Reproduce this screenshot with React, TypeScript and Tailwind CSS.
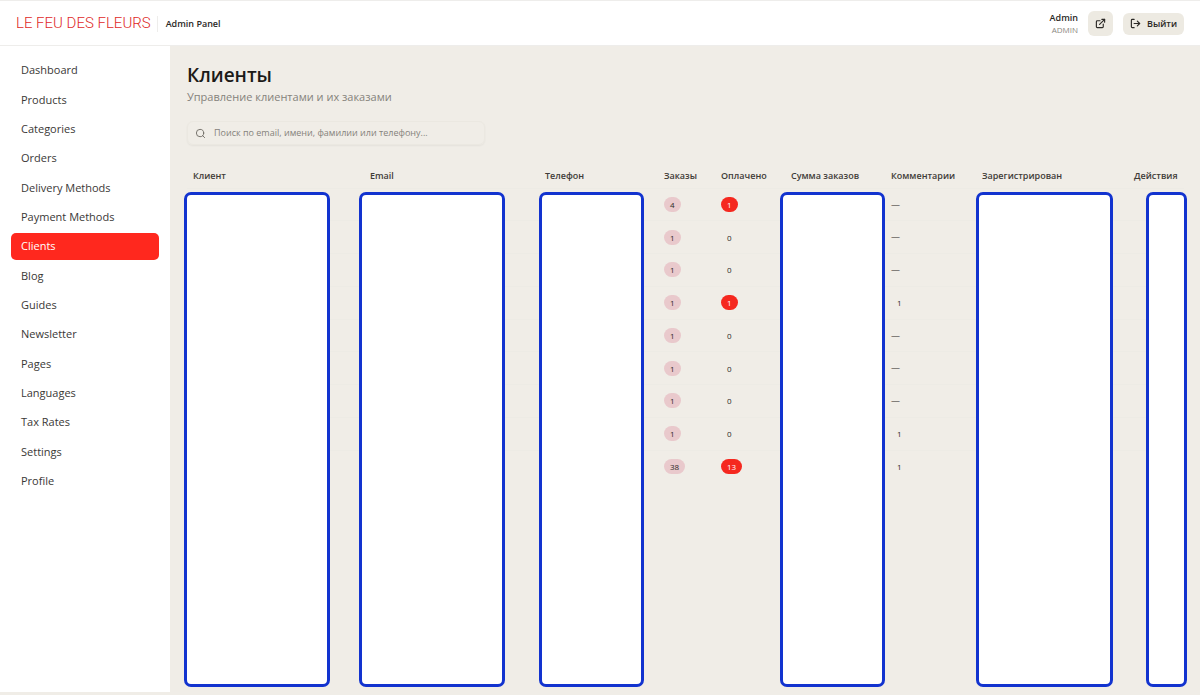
import React from 'react';
import { ExternalLink, LogOut, Search } from 'lucide-react';

const NAV_ITEMS = [
  'Dashboard',
  'Products',
  'Categories',
  'Orders',
  'Delivery Methods',
  'Payment Methods',
  'Clients',
  'Blog',
  'Guides',
  'Newsletter',
  'Pages',
  'Languages',
  'Tax Rates',
  'Settings',
  'Profile',
];

// cover: horizontal extent of the panel that hides the column's private data
const COLUMNS = [
  { title: 'Клиент', width: 'w-[177px]', cover: '-left-[3px] right-[34px]' },
  { title: 'Email', width: 'w-[175px]', cover: '-left-[5px] right-[34px]' },
  { title: 'Телефон', width: 'w-[119px]', cover: 'left-0 right-[14px]' },
  { title: 'Заказы', width: 'w-[57px]' },
  { title: 'Оплачено', width: 'w-[70px]' },
  { title: 'Сумма заказов', width: 'w-[100px]', cover: '-left-[5px] right-0' },
  { title: 'Комментарии', width: 'w-[91px]' },
  { title: 'Зарегистрирован', width: 'w-[152px]', cover: 'left-0 right-[15px]' },
  { title: 'Действия', width: 'w-[56px]', cover: 'left-[18px] -right-[3px]' },
];

const CLIENTS = [
  { orders: 4, paid: 1, comments: 0 },
  { orders: 1, paid: 0, comments: 0 },
  { orders: 1, paid: 0, comments: 0 },
  { orders: 1, paid: 1, comments: 1 },
  { orders: 1, paid: 0, comments: 0 },
  { orders: 1, paid: 0, comments: 0 },
  { orders: 1, paid: 0, comments: 0 },
  { orders: 1, paid: 0, comments: 1 },
  { orders: 38, paid: 13, comments: 1 },
];

const BADGE = 'inline-block rounded-full px-1.5 text-[8px] leading-[15px] font-medium';

const Header: React.FC = () => (
  <header className="flex h-[46px] items-center justify-between border-y border-[#eeedeb] bg-white px-4 pt-px">
    <div className="flex items-center">
      <a href="#" className="font-[Roboto,sans-serif] text-[15px] font-light text-[#e0291f]">
        LE FEU DES FLEURS
      </a>
      <span className="ml-1.5 h-4 w-px bg-[#eeedeb]" />
      <span className="ml-2 text-[9px] font-semibold">Admin Panel</span>
    </div>

    <div className="flex items-center gap-2.5">
      <div className="text-right leading-3">
        <p className="text-[9px] font-semibold">Admin</p>
        <p className="text-[8px] text-[#8b8882]">ADMIN</p>
      </div>
      <button
        type="button"
        aria-label="Open site"
        className="flex size-[25px] items-center justify-center rounded-md bg-[#edeae2]"
      >
        <ExternalLink size={11} strokeWidth={2.5} />
      </button>
      <button
        type="button"
        className="flex h-[22px] items-center gap-1.5 rounded-md bg-[#edeae2] px-[7px] text-[9px] font-semibold"
      >
        <LogOut size={11} strokeWidth={2.5} />
        Выйти
      </button>
    </div>
  </header>
);

const Sidebar: React.FC = () => (
  <aside className="w-[170px] shrink-0 bg-white px-[11px] pt-[10px]">
    <nav className="grid h-[440px] auto-rows-fr">
      {NAV_ITEMS.map(item => (
        <div key={item} className="py-px">
          <a
            href="#"
            className={
              item === 'Clients'
                ? 'flex h-full items-center rounded-[5px] bg-[#ff281e] px-2.5 text-[11px] text-white'
                : 'flex h-full items-center rounded-[5px] px-2.5 text-[11px] text-[#3a3836]'
            }
          >
            {item}
          </a>
        </div>
      ))}
    </nav>
  </aside>
);

const ClientsTable: React.FC = () => (
  <table className="h-[319px] w-full table-fixed border-collapse text-left">
    <thead>
      <tr>
        {COLUMNS.map(col => (
          <th
            key={col.title}
            className={`relative h-[25px] px-1.5 text-[9px] font-semibold whitespace-nowrap text-[#3f3c38] ${col.width}`}
          >
            {col.title}
            {col.cover && (
              <span
                className={`absolute top-full mt-1 h-[495px] rounded-[7px] border-[3px] border-[#1233cf] bg-white ${col.cover}`}
              />
            )}
          </th>
        ))}
      </tr>
    </thead>
    <tbody>
      {CLIENTS.map((client, i) => (
        <tr key={i} className="border-t border-[#edebe5] text-[9px]">
          <td />
          <td />
          <td />
          <td className="px-1.5">
            <span className={`${BADGE} bg-[#e9c9cc]`}>{client.orders}</span>
          </td>
          <td className="px-1.5">
            {client.paid > 0 ? (
              <span className={`${BADGE} bg-[#f5281f] text-white`}>{client.paid}</span>
            ) : (
              <span className={BADGE}>0</span>
            )}
          </td>
          <td />
          <td className="px-1.5">
            {client.comments > 0 ? <span className={BADGE}>{client.comments}</span> : '—'}
          </td>
          <td />
          <td />
        </tr>
      ))}
    </tbody>
  </table>
);

const App: React.FC = () => {
  return (
    <div className="flex min-h-screen flex-col bg-[#f0ede7] font-['Open_Sans',sans-serif] text-[#2b2926]">
      <Header />

      <div className="flex flex-1 pb-[3px]">
        <Sidebar />

        <main className="min-w-0 flex-1 px-4 pt-4 pl-[17px]">
          <h1 className="text-[19px] leading-[26px] font-semibold text-[#1c1a18]">Клиенты</h1>
          <p className="text-[11px] leading-[18px] text-[#85827b]">
            Управление клиентами и их заказами
          </p>

          {/* Search */}
          <label className="mt-[15px] flex h-6 w-[298px] items-center gap-2 rounded-md border border-[#ebe8e1] px-[7px] shadow-xs">
            <Search size={11} className="shrink-0 text-[#6d6a64]" />
            <input
              type="search"
              aria-label="Поиск"
              placeholder="Поиск по email, имени, фамилии или телефону..."
              className="w-full bg-transparent text-[9px] outline-none placeholder:text-[#85827b]"
            />
          </label>

          <div className="mt-[18px]">
            <ClientsTable />
          </div>
        </main>
      </div>
    </div>
  );
};

export default App;
